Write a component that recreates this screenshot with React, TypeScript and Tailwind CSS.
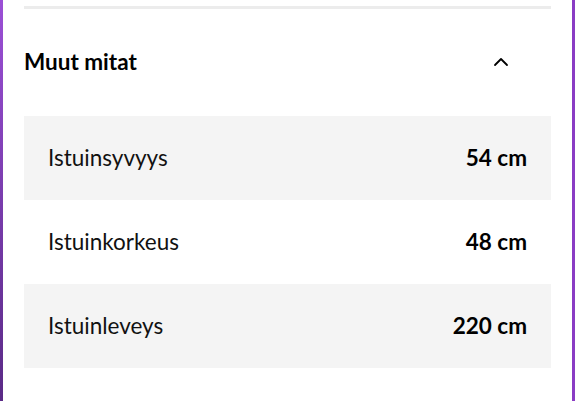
import { ChevronUp } from "lucide-react";

const ROWS = [
  { label: "Istuinsyvyys", value: "54 cm" },
  { label: "Istuinkorkeus", value: "48 cm" },
  { label: "Istuinleveys", value: "220 cm" },
];

export default function App() {
  return (
    <div className="h-[401px] w-[575px] flex bg-white font-['Lato',sans-serif] text-black overflow-hidden">
      <div className="w-[3px] shrink-0 bg-gradient-to-b from-[#9b4fd6] to-[#5a2a86]" />
      <div className="flex-1 px-[21px] pt-[6px]">
        <div className="h-[3px] bg-[#ececec]" />
        <div className="flex items-center justify-between h-[107px] pb-[1px]">
          <h3 className="text-[22.5px] font-bold">Muut mitat</h3>
          <ChevronUp size={24} strokeWidth={1.8} className="mr-[38px]" />
        </div>
        <div className="flex flex-col">
          {ROWS.map((row, i) => (
            <div
              key={row.label}
              className={`flex items-center justify-between h-[84px] px-6 text-[22.5px] ${i % 2 === 0 ? "bg-[#f4f4f4]" : "bg-white"}`}
            >
              <span className="text-[#111]">{row.label}</span>
              <span className="font-bold">{row.value}</span>
            </div>
          ))}
        </div>
      </div>
      <div className="w-[3px] shrink-0 bg-[#8a3cc4]" />
    </div>
  );
}
